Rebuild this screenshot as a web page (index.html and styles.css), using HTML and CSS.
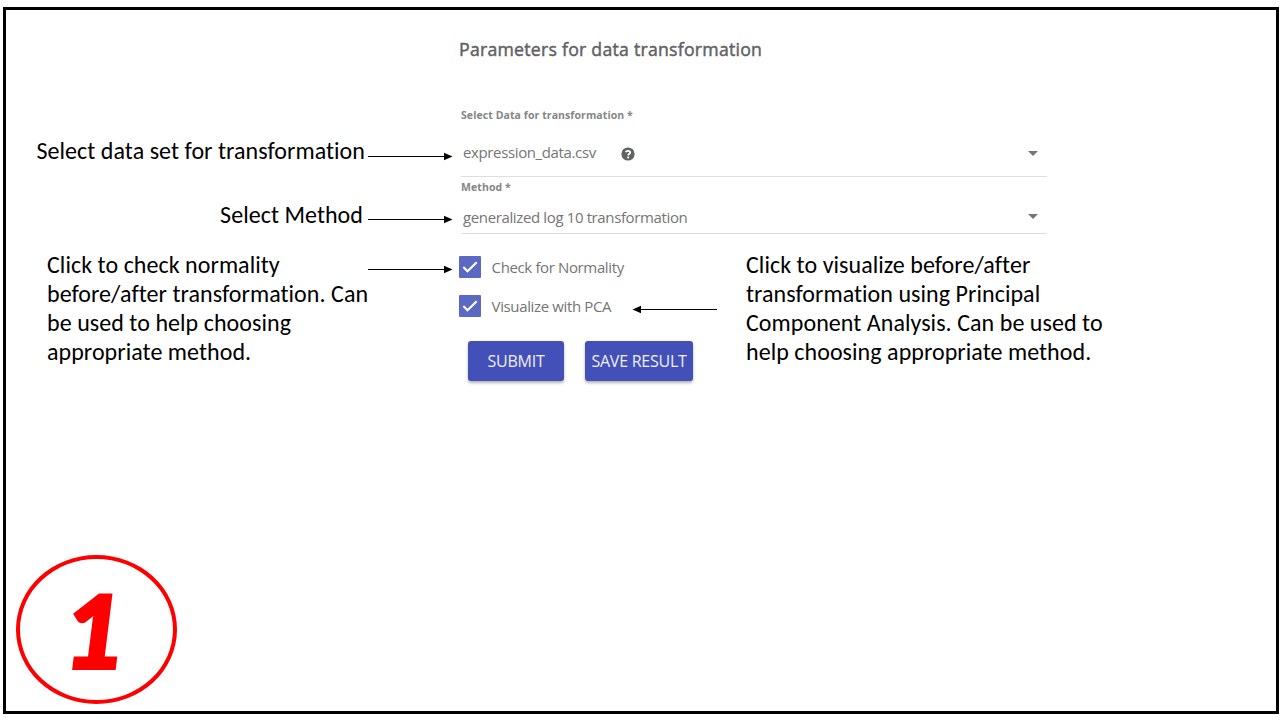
FILE: index.html
```html
<!DOCTYPE html>
<html lang="en">
<head>
<meta charset="utf-8">
<title>Parameters for data transformation</title>
<link rel="stylesheet" href="styles.css">
</head>
<body>
<main class="frame">
  <div class="layout">
    <aside class="notes">
      <div class="note note-data"><span>Select data set for transformation</span>
        <svg class="arrow" width="85" height="9" viewBox="0 0 85 9"><path d="M0 4.500H78" stroke="#000"/><path d="M76 .7L84.500 4.500L76 8.300z"/></svg></div>
      <div class="note note-method"><span>Select Method</span>
        <svg class="arrow" width="85" height="9" viewBox="0 0 85 9"><path d="M0 4.500H78" stroke="#000"/><path d="M76 .7L84.500 4.500L76 8.300z"/></svg></div>
      <div class="note note-check">
        <p class="copy"><span>Click to check normality</span><span>before/after transformation. Can</span><span>be used to help choosing</span><span>appropriate method.</span></p>
        <svg class="arrow" width="85" height="9" viewBox="0 0 85 9"><path d="M0 4.500H78" stroke="#000"/><path d="M76 .7L84.500 4.500L76 8.300z"/></svg>
      </div>
    </aside>
    <section class="form">
      <h1 class="title">Parameters for data transformation</h1>
      <div class="field field-data">
        <label class="label">Select Data for transformation *</label>
        <div class="select"><span>expression_data.csv</span>
          <svg class="help" width="14" height="14" viewBox="0 0 14 14"><circle cx="7" cy="7" r="6.600" fill="#606163"/><path d="M4.700 5.300C5.200 3.400 9.200 3.200 9.200 5.500C9.200 7 7.200 6.900 7.100 8.400" fill="none" stroke="#fff" stroke-width="1.800"/><path d="M6.200 9.500h1.900v1.800H6.200z" fill="#fff"/></svg>
          <svg class="caret" width="10" height="5" viewBox="0 0 10 5"><path d="M0 0H10L5 5z" fill="#757575"/></svg></div>
      </div>
      <div class="field field-method">
        <label class="label">Method *</label>
        <div class="select"><span>generalized log 10 transformation</span>
          <svg class="caret" width="10" height="5" viewBox="0 0 10 5"><path d="M0 0H10L5 5z" fill="#757575"/></svg></div>
      </div>
      <div class="lower">
        <div class="controls">
          <div class="check"><span class="box"><svg width="22" height="22" viewBox="0 0 22 22"><path d="M4.300 11L8.500 15.200L17.700 6.200" fill="none" stroke="#fff" stroke-width="2.100"/></svg></span><span>Check for Normality</span></div>
          <div class="check"><span class="box"><svg width="22" height="22" viewBox="0 0 22 22"><path d="M4.300 11L8.500 15.200L17.700 6.200" fill="none" stroke="#fff" stroke-width="2.100"/></svg></span><span>Visualize with PCA</span></div>
          <div class="buttons"><button class="btn submit">SUBMIT</button><button class="btn save">SAVE RESULT</button></div>
        </div>
        <svg class="arrow back" width="85" height="9" viewBox="0 0 85 9"><path d="M7 4.500H85" stroke="#000"/><path d="M9 .7L.5 4.500L9 8.300z"/></svg>
        <p class="copy"><span>Click to visualize before/after</span><span>transformation using Principal</span><span>Component Analysis. Can be used to</span><span>help choosing appropriate method.</span></p>
      </div>
    </section>
  </div>
  <div class="step">1</div>
</main>
</body>
</html>
```
FILE: styles.css
```css
* { box-sizing: border-box; }
body { margin: 0; background: #fff; overflow: hidden; }
.frame {
  width: 1276px; height: 707px; margin: 7px 0 0 3px;
  border: 3px solid #000;
  display: flex; flex-direction: column; justify-content: space-between;
  font-family: "Open Sans", "Noto Sans", sans-serif; color: #757575;
}
.layout { display: flex; }
.notes {
  width: 453px; padding-top: 126px; flex: none;
  font-family: Carlito, Calibri, Lato, sans-serif; font-size: 24px; line-height: 29px; letter-spacing: .05px; color: #000;
  font-variant-ligatures: none;
}
.note { display: flex; justify-content: flex-end; padding-right: 6px; white-space: nowrap; }
.arrow { display: block; flex: none; }
.note .arrow { margin-left: 3px; margin-top: 16px; }
.note-method { margin-top: 35px; }
.note-method .arrow { margin-left: 5px; margin-top: 15px; }
.note-check { margin-top: 21px; justify-content: space-between; padding-left: 41px; }
.note-check .arrow { margin-left: 0; margin-top: 15px; }
.note-check .copy { width: 321px; }
.copy { margin: 0; display: flex; flex-direction: column; align-items: flex-start; white-space: nowrap; }
.form { width: 588px; flex: none; }
.title { margin: 0; padding-top: 27px; height: 94px; font-size: 17.7px; line-height: 24px; font-weight: 400; letter-spacing: .24px; -webkit-text-stroke: .45px #606163; color: #606163; white-space: nowrap; }
.field { margin-left: 2px; border-bottom: 1.5px solid #dedede; }
.label { display: block; font-size: 10.5px; line-height: 14px; font-weight: 700; letter-spacing: .08px; color: #858585; padding-top: 4px; }
.field-data { height: 73px; }
.field-method { height: 57px; }
.field-method .label { padding-top: 3px; }
.select { display: flex; align-items: center; height: 24px; padding: 0 9px 0 2px; font-size: 15px; letter-spacing: -.37px; }
.field-data .select { margin-top: 18px; }
.field-method .select { margin-top: 11px; }
.help { margin: 4px 0 0 25px; }
.caret { margin-left: auto; }
.field-data .caret { margin-top: 2px; }
.field-method .caret { margin-bottom: 1px; }
.lower { display: flex; width: 680px; height: 160px; }
.controls { width: 173px; padding-top: 22px; flex: none; }
.check { display: flex; gap: 10.6px; align-items: center; height: 22px; font-size: 15px; letter-spacing: -.37px; white-space: nowrap; margin-bottom: 17px; }
.box { width: 22px; height: 22px; background: #5c69c2; border-radius: 1px; flex: none; }
.box svg { display: block; }
.buttons { display: flex; gap: 21px; margin: 24px 0 0 9px; width: 226px; }
.btn { height: 40px; border: 0; border-radius: 3px; padding: 0; background: #4350b7; color: #eef0fa; font: 16px "Open Sans", "Noto Sans", sans-serif; letter-spacing: -.25px; white-space: nowrap; box-shadow: 0 2px 3px rgba(0,0,0,.3); }
.submit { width: 96px; }
.save { width: 108px; }
.back { margin-top: 71px; }
.lower .copy { margin: 16px 0 0 29px; font-family: Carlito, Calibri, Lato, sans-serif; font-size: 24px; line-height: 29px; letter-spacing: .05px; color: #000; font-variant-ligatures: none; }
.step {
  width: 161px; height: 149px; margin: 0 0 7px 10px; padding-right: 10px;
  border: 4px solid #f00; border-radius: 50%;
  display: flex; align-items: center; justify-content: center;
  color: #f00; font: italic 700 112px/1 Carlito, Calibri, Lato, sans-serif;
  -webkit-text-stroke: 4px #f00; stroke-linejoin: round;
}
```
